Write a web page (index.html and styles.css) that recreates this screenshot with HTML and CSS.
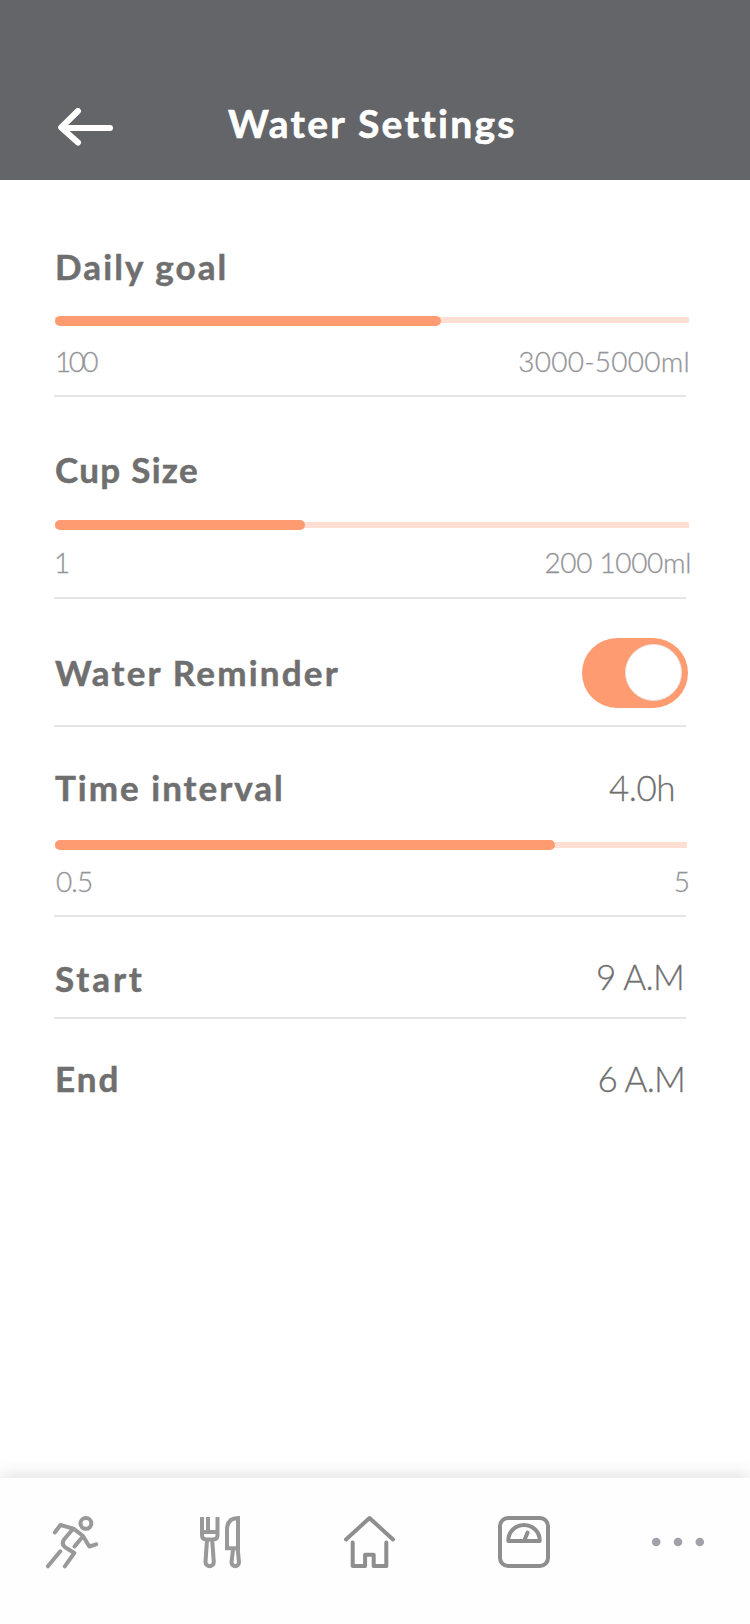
FILE: index.html
```html
<!DOCTYPE html>
<html lang="en">
<head>
<meta charset="utf-8">
<title>Water Settings</title>
<link rel="stylesheet" href="styles.css">
</head>
<body>
<div class="screen">
  <header class="header">
    <svg class="back" width="55" height="38" viewBox="0 0 55 38" fill="none" stroke="#fff" stroke-width="6" stroke-linecap="round" stroke-linejoin="round"><path d="M20 3 3.200 19.500 20 34.500M5 20H52"/></svg>
    <h1 class="title">Water Settings</h1>
  </header>
  <main class="settings">
    <section class="group goal">
      <h2 class="label t-daily">Daily goal</h2>
      <div class="meter"><div class="fill" style="width:386px"></div></div>
      <div class="range"><span class="t-100">100</span><span class="t-3000">3000-5000ml</span></div>
    </section>
    <section class="group cup">
      <h2 class="label t-cup">Cup Size</h2>
      <div class="meter"><div class="fill" style="width:250px"></div></div>
      <div class="range"><span>1</span><span class="t-200">200 1000ml</span></div>
    </section>
    <section class="group reminder">
      <h2 class="label t-reminder">Water Reminder</h2>
      <div class="toggle"><div class="knob"></div></div>
    </section>
    <section class="group interval">
      <div class="row"><h2 class="label t-interval">Time interval</h2><span class="value t-4h">4.0h</span></div>
      <div class="meter"><div class="fill" style="width:500px"></div></div>
      <div class="range"><span class="t-05">0.5</span><span class="t-5">5</span></div>
    </section>
    <section class="group start">
      <h2 class="label t-start">Start</h2><span class="value t-9">9 A.M</span>
    </section>
    <section class="group end">
      <h2 class="label t-end">End</h2><span class="value t-6">6 A.M</span>
    </section>
  </main>
  <div class="shade"></div>
  <nav class="tabs">
    <svg class="run" width="54" height="54" viewBox="45 1515 54 54" fill="none" stroke="#999" stroke-width="4" stroke-linecap="round" stroke-linejoin="round"><circle cx="85.900" cy="1523.400" r="5.400"/><path d="M54.800 1532.500 60.400 1525 73.500 1528.700 83 1536 89.300 1546.500 96.200 1544.300M72.500 1529.500 64 1539.500Q61 1544.500 65.500 1547.500L74.300 1553 64.800 1566.300M82 1537.500 74.500 1546.500M60.300 1551.300 47.900 1566.300"/></svg>
    <svg class="eat" width="42" height="54" viewBox="200 1515 42 54" fill="none" stroke="#999" stroke-width="4"><path d="M202 1517V1535Q202 1539.500 206.500 1539.500H213Q217.500 1539.500 217.500 1535V1517M208 1517V1532M202 1532H217.500M207 1540 205.500 1562C205.500 1567.500 213.800 1567.500 213.800 1562L212.200 1540M227 1548.300V1530Q227 1518 238 1518V1548.300H227M225 1548.300H240M233 1550 231.500 1562C231.500 1567.500 239 1567.500 239 1562L237.800 1550"/></svg>
    <svg class="home" width="52" height="54" viewBox="343 1515 52 54" fill="none" stroke="#8e8e8e" stroke-width="4" stroke-linecap="round" stroke-linejoin="round"><path d="M346 1539.500 369.500 1518 393 1539.500M352.700 1542.500V1566H365.100V1554.800H373.700V1566H386.300V1542.500"/></svg>
    <svg class="scale" width="52" height="52" viewBox="0 0 52 52" fill="none" stroke="#8e8e8e" stroke-width="4" stroke-linecap="round" stroke-linejoin="round"><rect x="2" y="2" width="48" height="48" rx="8"/><path d="M10.300 25C10 15.500 17.500 9.100 26 9.100S42 15.500 41.700 25ZM26.500 24 29.600 16.500"/></svg>
    <svg class="more" width="54" height="10" viewBox="0 0 54 10" fill="#a2a0a8"><circle cx="5.200" cy="5" r="4.300"/><circle cx="27" cy="5" r="4.300"/><circle cx="48.800" cy="5" r="4.300"/></svg>
  </nav>
</div>
</body>
</html>
```
FILE: styles.css
```css
* { box-sizing: border-box; }
body { margin: 0; background: #fff; font-family: Lato, "Open Sans", sans-serif; font-variant-ligatures: none; }
.screen { width: 750px; height: 1624px; display: flex; flex-direction: column; overflow: hidden; }
.header { height: 180px; background: #646569; display: flex; align-items: flex-start; padding-left: 58px; }
.back { margin-top: 108px; }
.title { margin: 99px 0 0 115px; font-size: 39px; line-height: 48px; font-weight: 700; letter-spacing: 2.25px; color: #fff; white-space: nowrap; -webkit-text-stroke: 0.6px #fff; }
.settings { flex: 1; padding-left: 54px; }
.group { width: 632px; border-bottom: 2px solid #e5e5e5; }
.label { margin: 0 0 0 1px; font-size: 35px; line-height: 40px; font-weight: 700; color: #6f6f6f; white-space: nowrap; -webkit-text-stroke: 0.5px #6f6f6f; }
.value { font-size: 35px; line-height: 40px; font-weight: 300; color: #6f6f6f; white-space: nowrap; -webkit-text-stroke: 0.3px #6f6f6f; }
.meter { width: 634px; height: 10px; margin-left: 1px; background: linear-gradient(#ffdfd2, #ffdfd2) no-repeat 0 2px / 100% 6px; }
.fill { height: 10px; border-radius: 5px; background: #ff9b71; }
.range { display: flex; justify-content: space-between; width: 636px; font-size: 28px; line-height: 34px; font-weight: 300; color: #949599; white-space: nowrap; -webkit-text-stroke: 0.3px #949599; }

.t-daily { letter-spacing: 2.1px; }
.t-cup { letter-spacing: 1.3px; }
.t-reminder { letter-spacing: 2.2px; }
.t-interval { letter-spacing: 2px; }
.t-start { letter-spacing: 2.9px; }
.t-end { letter-spacing: 2px; }
.t-100 { margin-left: 1px; letter-spacing: -2.6px; }
.t-3000 { margin-right: 0; letter-spacing: 0.25px; }
.t-200 { margin-right: -1px; letter-spacing: -0.35px; }
.t-05 { margin-left: 2px; letter-spacing: -0.9px; }
.t-4h { margin-right: 11px; letter-spacing: -0.5px; }
.t-9 { margin-right: 2px; letter-spacing: -0.7px; }
.t-6 { margin-right: 1px; letter-spacing: -0.8px; }

.goal { height: 217px; padding-top: 66px; }
.goal .meter { margin-top: 30px; background-position: 0 1px; }
.goal .range { margin-top: 18px; }
.cup { height: 202px; padding-top: 52px; }
.cup .meter { margin-top: 31px; }
.cup .range { margin-top: 15px; }
.reminder { height: 128px; display: flex; justify-content: space-between; padding-top: 39px; }
.reminder .label { margin-top: 14px; }
.toggle { width: 106px; height: 70px; margin-right: -2px; border-radius: 35px; background: #ff9b71; padding: 6px; display: flex; justify-content: flex-end; }
.knob { width: 57px; height: 57px; border-radius: 50%; background: #fff; border: 1px solid #e8e4e2; }
.interval { height: 190px; padding-top: 40px; }
.row { display: flex; justify-content: space-between; }
.interval .meter { width: 632px; margin-top: 33px; }
.interval .range { margin-top: 14px; }
.start { height: 102px; display: flex; justify-content: space-between; padding-top: 41px; }
.start .value { margin-top: -2px; }
.end { display: flex; justify-content: space-between; padding-top: 39px; border: 0; }
.shade { height: 18px; background: linear-gradient(#fff, #fafafa 40%, #ebebeb); -webkit-mask-image: linear-gradient(90deg, rgba(0,0,0,.5), #000 14px, #000 736px, rgba(0,0,0,.5)); mask-image: linear-gradient(90deg, rgba(0,0,0,.5), #000 14px, #000 736px, rgba(0,0,0,.5)); }
.tabs { height: 146px; display: flex; align-items: flex-start; padding: 37px 0 0 45px; background: #fefefe; }
.eat { margin-left: 101px; }
.home { margin-left: 101px; }
.scale { margin: 1px 0 0 103px; }
.more { margin: 22px 0 0 101px; }
```
